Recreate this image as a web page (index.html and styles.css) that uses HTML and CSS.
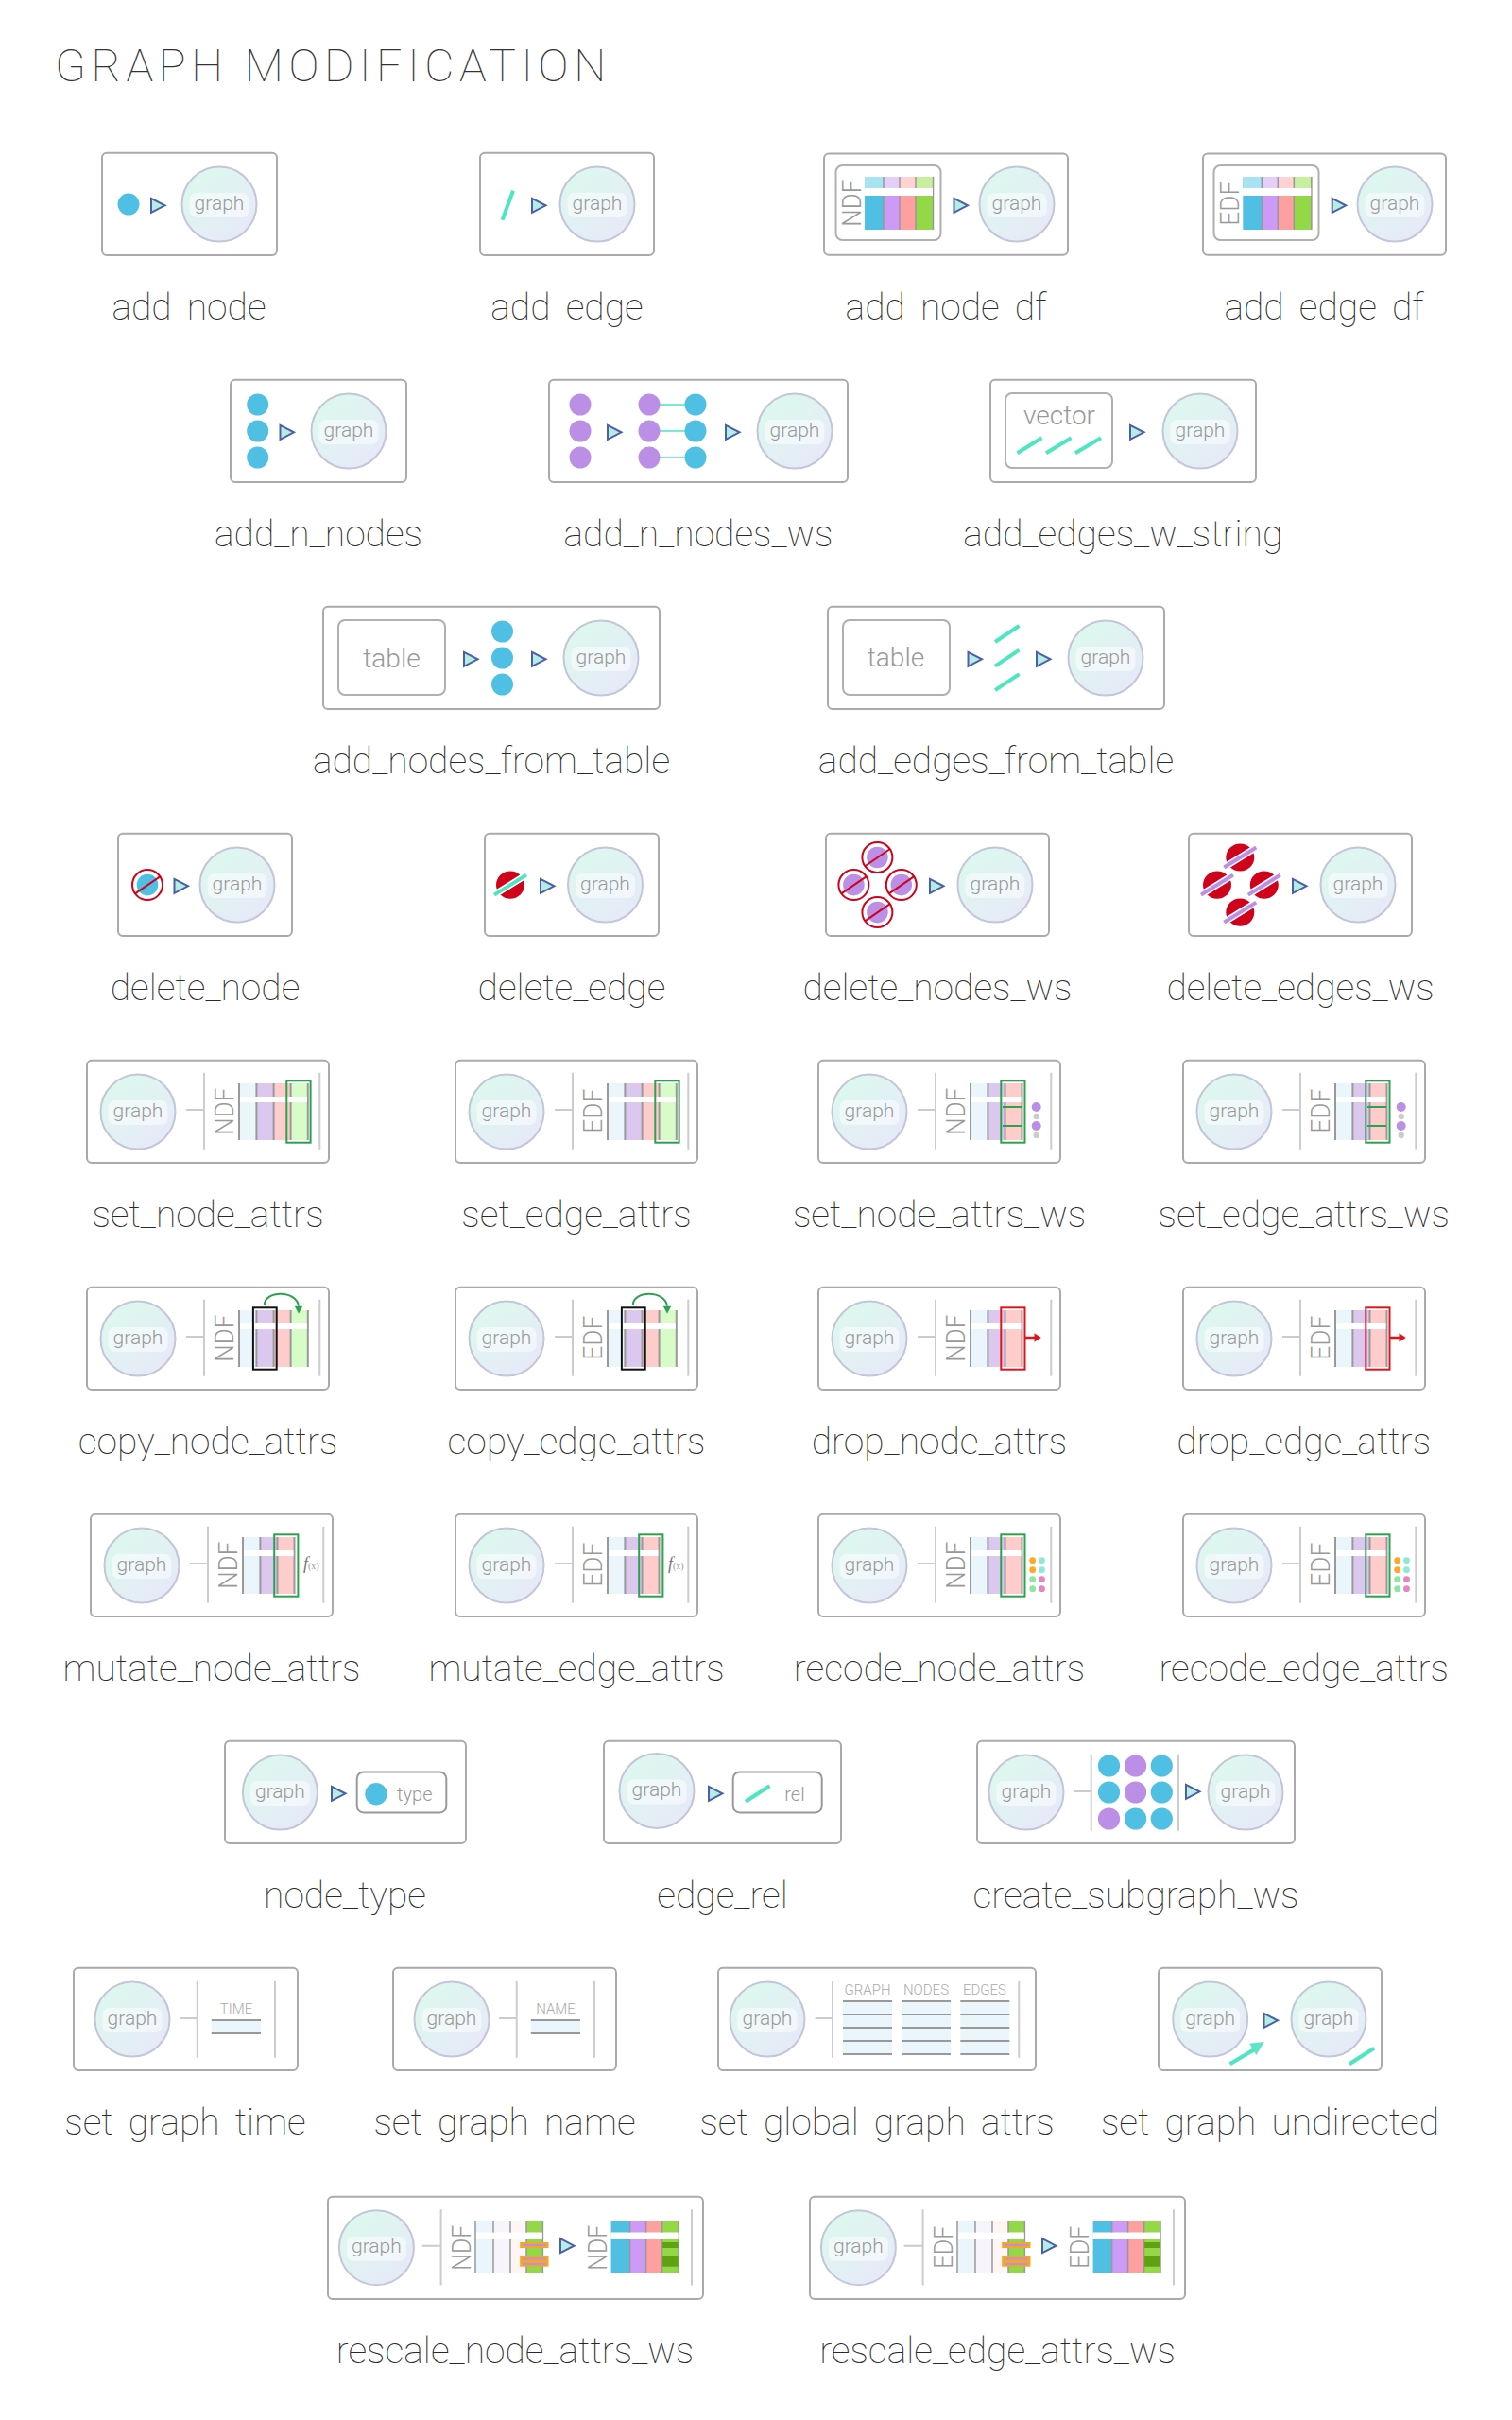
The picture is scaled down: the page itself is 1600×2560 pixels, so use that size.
FILE: index.html
```html
<!DOCTYPE html>
<html lang="en">
<head>
<meta charset="utf-8">
<title>Graph Modification</title>
<link rel="stylesheet" href="styles.css">
</head>
<body>
<svg class="defs" aria-hidden="true">
  <defs>
    <linearGradient id="gg" x1="0.15" y1="0.05" x2="0.85" y2="0.95">
      <stop offset="0" stop-color="#dcf9ee"/>
      <stop offset="1" stop-color="#e7e9f8"/>
    </linearGradient>
    <g id="g">
      <circle class="gc" r="39.5"/>
      <rect class="gp" x="-31.5" y="-12" width="63" height="26" rx="7"/>
    </g>
    <polygon id="tri" class="tri" points="1,-7.5 1,7.5 15.5,0"/>
    <g id="shell">
      <line class="bar" x1="106" y1="53.3" x2="125" y2="53.3"/>
      <line class="bar" x1="125" y1="14" x2="125" y2="95"/>
      <line class="bar" x1="247.3" y1="14" x2="247.3" y2="95"/>
    </g>
    <g id="df4">
      <rect class="c-b" width="20" height="56"/><rect class="c-p" x="20" width="17" height="56"/><rect class="c-r" x="37" width="17" height="56"/><rect class="c-g" x="54" width="19" height="56"/>
      <rect class="l-b" width="20" height="12"/><rect class="l-p" x="20" width="17" height="12"/><rect class="l-r" x="37" width="17" height="12"/><rect class="l-g" x="54" width="19" height="12"/>
      <rect class="wh" y="12" width="72" height="8"/>
      <path class="sep1" d="M20 0V56M37 0V56M54 0V56M72.5 0V56"/>
      <rect class="wh" y="12" width="72" height="8"/>
    </g>
    <g id="df5">
      <rect class="c-b" width="20" height="56"/><rect class="c-p" x="20" width="17" height="56"/><rect class="c-r" x="37" width="17" height="56"/><rect class="c-g" x="54" width="17.4" height="56"/>
      <rect class="wh" y="12.7" width="71" height="7.3"/>
      <path class="sep1" d="M20 0V56M37 0V56M54 0V56M71.4 0V56"/>
      <rect class="wh" y="12.7" width="71" height="7.3"/>
      <rect class="dk" x="54.5" y="23" width="16.5" height="6"/><rect class="dk" x="54.5" y="37" width="16.5" height="11.7"/>
    </g>
    <g id="pale10">
      <rect class="p-b" width="19" height="56"/><rect class="p-p2" x="19" width="18" height="56"/><rect class="p-r2" x="37" width="17" height="56"/><rect class="c-g" x="54" width="17.4" height="56"/>
      <rect class="wh" y="12.7" width="71" height="7.3"/>
      <path class="sep1" d="M0 0V56M19 0V56M37 0V56M54 0V56M71.4 0V56"/>
      <rect class="wh" x="1" y="12.7" width="69.6" height="7.3"/>
      <rect class="or" x="47.2" y="23" width="30.3" height="6"/><rect class="or" x="47.2" y="37" width="30.3" height="11.7"/>
      <rect class="st" x="50" y="25" width="24.6" height="2"/><rect class="st" x="50" y="39.5" width="24.6" height="2"/><rect class="st" x="50" y="45" width="24.6" height="2"/>
    </g>
    <g id="pt3">
      <rect class="p-b" width="18.4" height="60"/><rect class="p-p" x="18.4" width="18.1" height="60"/><rect class="p-r" x="36.5" width="18" height="60"/>
      <path class="sep" d="M0 0V60M18.4 0V60M36.5 0V60M54.5 0V60"/>
      <rect class="wh" x="1" y="14" width="52.5" height="6"/>
    </g>
    <g id="pt4">
      <rect class="p-b" width="18.4" height="60"/><rect class="p-p" x="18.4" width="18.2" height="60"/><rect class="p-r" x="36.6" width="18" height="60"/><rect class="p-g" x="54.6" width="18.2" height="60"/>
      <path class="sep" d="M0 0V60M18.4 0V60M36.6 0V60M54.6 0V60M72.8 0V60"/>
      <rect class="wh" x="1" y="14" width="70.8" height="6"/>
    </g>
    <g id="copy">
      <path class="arc" d="M188.8 20C188.8 4 223 4 225 21"/>
      <polygon class="arh" points="220.8,21 229.2,21 225,29"/>
      <rect class="hl-k" x="176.9" y="22.6" width="24.8" height="65.4"/>
    </g>
    <g id="rb"><circle class="ring" r="16"/><circle class="nb" r="11.3"/><line class="sl" x1="-13.5" y1="9.5" x2="13.5" y2="-9"/></g>
    <g id="rp"><circle class="ring" r="16"/><circle class="np" r="11.3"/><line class="sl" x1="-13.5" y1="9.5" x2="13.5" y2="-9"/></g>
    <g id="bt"><ellipse class="ball" rx="15" ry="14.6"/><line class="halo" x1="-17" y1="10.5" x2="17" y2="-10.5"/><line class="edge4" x1="-17" y1="10.5" x2="17" y2="-10.5"/></g>
    <g id="bp"><ellipse class="ball" rx="15" ry="14.6"/><line class="halo" x1="-17" y1="10.5" x2="17" y2="-10.5"/><line class="edgep" x1="-17" y1="10.5" x2="17" y2="-10.5"/></g>
    <g id="recode">
      <circle class="d-o" cx="227.7" cy="50" r="3.4"/><circle class="d-t" cx="237.5" cy="50" r="3.4"/>
      <circle class="d-o" cx="227.7" cy="60" r="3.4"/><circle class="d-t" cx="237.5" cy="60" r="3.4"/>
      <circle class="d-l" cx="227.7" cy="70" r="3.4"/><circle class="d-m" cx="237.5" cy="70" r="3.4"/>
      <circle class="d-l" cx="227.7" cy="80" r="3.4"/><circle class="d-m" cx="237.5" cy="80" r="3.4"/>
    </g>
    <g id="wsmark">
      <rect class="hl-g" x="194.3" y="22.6" width="25.2" height="65.4"/>
      <path class="tick" d="M196 50.3H216M196 70.3H216"/>
      <circle class="np" cx="231.7" cy="50.3" r="5"/><circle class="nx" cx="231.7" cy="60.3" r="3.2"/>
      <circle class="np" cx="231.7" cy="70.3" r="5"/><circle class="nx" cx="231.7" cy="80.3" r="3.2"/>
    </g>
    <g id="drop">
      <rect class="hl-r" x="194.3" y="22.6" width="25.2" height="65.4"/>
      <line class="drop-l" x1="220" y1="54.3" x2="231" y2="54.3"/>
      <polygon class="drop-h" points="229.5,49.5 236.8,54.3 229.5,59"/>
    </g>
  </defs>
</svg>

<h1 class="title">GRAPH MODIFICATION</h1>

<main class="rows">

<section class="row r1">
  <div class="card">
    <svg class="dia" width="187" height="111" viewBox="0 -.7 187 111">
      <rect class="frame" x="1" y="1" width="185" height="108.3" rx="5"/>
      <circle class="nb" cx="29" cy="55.4" r="11.5"/>
      <use href="#tri" x="52" y="56.6"/>
      <use href="#g" x="125" y="55.4"/><text class="gt" x="125" y="60">graph</text>
    </svg>
    <div class="label">add_node</div>
  </div>
  <div class="card">
    <svg class="dia" width="186" height="111" viewBox="0 -.7 186 111">
      <rect class="frame" x="1" y="1" width="184" height="108.3" rx="5"/>
      <line class="edge" x1="36" y1="41" x2="24.5" y2="72"/>
      <use href="#tri" x="55" y="56.6"/>
      <use href="#g" x="125" y="55.4"/><text class="gt" x="125" y="60">graph</text>
    </svg>
    <div class="label">add_edge</div>
  </div>
  <div class="card">
    <svg class="dia" width="260" height="111" viewBox="0 -.7 260 111">
      <rect class="frame" x="1" y="1.7" width="258" height="107.3" rx="5"/>
      <rect class="inner" x="13.5" y="14.3" width="111" height="79" rx="7"/>
      <text class="vt" transform="translate(40,79) rotate(-90)" textLength="50" lengthAdjust="spacingAndGlyphs">NDF</text>
      <use href="#df4" x="44" y="26.3"/>
      <use href="#tri" x="137.5" y="56.6"/>
      <use href="#g" x="205" y="55.4"/><text class="gt" x="205" y="60">graph</text>
    </svg>
    <div class="label">add_node_df</div>
  </div>
  <div class="card">
    <svg class="dia" width="259" height="111" viewBox="0 -.7 259 111">
      <rect class="frame" x="1" y="1.7" width="257" height="107.3" rx="5"/>
      <rect class="inner" x="12.5" y="14.3" width="111" height="79" rx="7"/>
      <text class="vt" transform="translate(39,78) rotate(-90)" textLength="47" lengthAdjust="spacingAndGlyphs">EDF</text>
      <use href="#df4" x="43.3" y="26.3"/>
      <use href="#tri" x="136.7" y="56.6"/>
      <use href="#g" x="204" y="55.4"/><text class="gt" x="204" y="60">graph</text>
    </svg>
    <div class="label">add_edge_df</div>
  </div>
</section>

<section class="row r2">
  <div class="card">
    <svg class="dia" width="188" height="111" viewBox="0 -.7 188 111">
      <rect class="frame" x="1" y="1" width="186" height="108.3" rx="5"/>
      <circle class="nb" cx="29.7" cy="27.3" r="11.5"/><circle class="nb" cx="29.7" cy="55.3" r="11.5"/><circle class="nb" cx="29.7" cy="83.3" r="11.5"/>
      <use href="#tri" x="52.5" y="56.6"/>
      <use href="#g" x="126" y="55.4"/><text class="gt" x="126" y="60">graph</text>
    </svg>
    <div class="label">add_n_nodes</div>
  </div>
  <div class="card">
    <svg class="dia" width="318" height="111" viewBox="0 -.7 318 111">
      <rect class="frame" x="1" y="1" width="316" height="108.3" rx="5"/>
      <circle class="np" cx="34" cy="27.3" r="11.5"/><circle class="np" cx="34" cy="55.3" r="11.5"/><circle class="np" cx="34" cy="83.3" r="11.5"/>
      <use href="#tri" x="62" y="56.6"/>
      <path class="link" d="M115 27.3H150M115 55.3H150M115 83.3H150"/>
      <circle class="np" cx="107" cy="27.3" r="11.5"/><circle class="np" cx="107" cy="55.3" r="11.5"/><circle class="np" cx="107" cy="83.3" r="11.5"/>
      <circle class="nb" cx="156" cy="27.3" r="11.5"/><circle class="nb" cx="156" cy="55.3" r="11.5"/><circle class="nb" cx="156" cy="83.3" r="11.5"/>
      <use href="#tri" x="187" y="56.6"/>
      <use href="#g" x="261" y="55.4"/><text class="gt" x="261" y="60">graph</text>
    </svg>
    <div class="label">add_n_nodes_ws</div>
  </div>
  <div class="card">
    <svg class="dia" width="283" height="111" viewBox="0 -.7 283 111">
      <rect class="frame" x="1" y="1" width="281" height="108.3" rx="5"/>
      <rect class="inner" x="17" y="15.3" width="113" height="79" rx="7"/>
      <text class="bt" x="74" y="48">vector</text>
      <path class="edge" d="M29.5 78.5L55.5 62.5M60 78.5L86.5 62.5M91 78.5L118 62.5"/>
      <use href="#tri" x="148" y="56.6"/>
      <use href="#g" x="223" y="55.4"/><text class="gt" x="223" y="60">graph</text>
    </svg>
    <div class="label">add_edges_w_string</div>
  </div>
</section>

<section class="row r3">
  <div class="card">
    <svg class="dia" width="358" height="111" viewBox="0 -.7 358 111">
      <rect class="frame" x="1" y="1" width="356" height="108.3" rx="5"/>
      <rect class="inner" x="17" y="15.3" width="113" height="79" rx="7"/>
      <text class="bt" x="73.5" y="65">table</text>
      <use href="#tri" x="149" y="56.6"/>
      <circle class="nb" cx="190.5" cy="27.3" r="11.5"/><circle class="nb" cx="190.5" cy="55.3" r="11.5"/><circle class="nb" cx="190.5" cy="83.3" r="11.5"/>
      <use href="#tri" x="221" y="56.6"/>
      <use href="#g" x="295" y="55.4"/><text class="gt" x="295" y="60">graph</text>
    </svg>
    <div class="label">add_nodes_from_table</div>
  </div>
  <div class="card">
    <svg class="dia" width="358" height="111" viewBox="0 -.7 358 111">
      <rect class="frame" x="1" y="1" width="356" height="108.3" rx="5"/>
      <rect class="inner" x="17" y="15.3" width="113" height="79" rx="7"/>
      <text class="bt" x="73" y="64.5">table</text>
      <use href="#tri" x="148.5" y="56.6"/>
      <path class="edge" d="M178 38.3L203.5 21.3M178 64L203.5 47M178 89.5L203.5 72.5"/>
      <use href="#tri" x="221" y="56.6"/>
      <use href="#g" x="295" y="55.4"/><text class="gt" x="295" y="60">graph</text>
    </svg>
    <div class="label">add_edges_from_table</div>
  </div>
</section>

<section class="row r4">
  <div class="card">
    <svg class="dia" width="186" height="111" viewBox="0 -.7 186 111">
      <rect class="frame" x="1" y="1" width="184" height="108.3" rx="5"/>
      <use href="#rb" x="32" y="55.4"/>
      <use href="#tri" x="59.5" y="56.6"/>
      <use href="#g" x="127" y="55.4"/><text class="gt" x="127" y="60">graph</text>
    </svg>
    <div class="label">delete_node</div>
  </div>
  <div class="card">
    <svg class="dia" width="186" height="111" viewBox="0 -.7 186 111">
      <rect class="frame" x="1" y="1" width="184" height="108.3" rx="5"/>
      <use href="#bt" x="28" y="55.4"/>
      <use href="#tri" x="59" y="56.6"/>
      <use href="#g" x="128.5" y="55.4"/><text class="gt" x="128.5" y="60">graph</text>
    </svg>
    <div class="label">delete_edge</div>
  </div>
  <div class="card">
    <svg class="dia" width="238" height="111" viewBox="0 -.7 238 111">
      <rect class="frame" x="1" y="1" width="236" height="108.3" rx="5"/>
      <use href="#rp" x="55.4" y="26.3"/><use href="#rp" x="30.4" y="55.4"/><use href="#rp" x="80.8" y="55.4"/><use href="#rp" x="55.4" y="84.4"/>
      <use href="#tri" x="110" y="56.6"/>
      <use href="#g" x="180" y="55.4"/><text class="gt" x="180" y="60">graph</text>
    </svg>
    <div class="label">delete_nodes_ws</div>
  </div>
  <div class="card">
    <svg class="dia" width="238" height="111" viewBox="0 -.7 238 111">
      <rect class="frame" x="1" y="1" width="236" height="108.3" rx="5"/>
      <use href="#bp" x="55.3" y="26.3"/><use href="#bp" x="31" y="55.4"/><use href="#bp" x="80.8" y="55.4"/><use href="#bp" x="55.3" y="84.4"/>
      <use href="#tri" x="110" y="56.6"/>
      <use href="#g" x="180" y="55.4"/><text class="gt" x="180" y="60">graph</text>
    </svg>
    <div class="label">delete_edges_ws</div>
  </div>
</section>

<section class="row r5">
  <div class="card">
    <svg class="dia" width="258" height="111" viewBox="0 -.7 258 111">
      <rect class="frame" x="1" y="1" width="256" height="108.3" rx="5"/>
      <use href="#shell"/>
      <use href="#g" x="55" y="55.4"/><text class="gt" x="55" y="60">graph</text>
      <text class="vt" transform="translate(155.8,80) rotate(-90)" textLength="50" lengthAdjust="spacingAndGlyphs">NDF</text>
      <use href="#pt4" x="162" y="25.3"/>
      <rect class="hl-g" x="212.3" y="22.6" width="25.3" height="65.4"/>
    </svg>
    <div class="label">set_node_attrs</div>
  </div>
  <div class="card">
    <svg class="dia" width="258" height="111" viewBox="0 -.7 258 111">
      <rect class="frame" x="1" y="1" width="256" height="108.3" rx="5"/>
      <use href="#shell"/>
      <use href="#g" x="55" y="55.4"/><text class="gt" x="55" y="60">graph</text>
      <text class="vt" transform="translate(155.8,78) rotate(-90)" textLength="47" lengthAdjust="spacingAndGlyphs">EDF</text>
      <use href="#pt4" x="162" y="25.3"/>
      <rect class="hl-g" x="212.3" y="22.6" width="25.3" height="65.4"/>
    </svg>
    <div class="label">set_edge_attrs</div>
  </div>
  <div class="card">
    <svg class="dia" width="258" height="111" viewBox="0 -.7 258 111">
      <rect class="frame" x="1" y="1" width="256" height="108.3" rx="5"/>
      <use href="#shell"/>
      <use href="#g" x="55" y="55.4"/><text class="gt" x="55" y="60">graph</text>
      <text class="vt" transform="translate(155.8,80) rotate(-90)" textLength="50" lengthAdjust="spacingAndGlyphs">NDF</text>
      <use href="#pt3" x="162" y="25.3"/>
      <use href="#wsmark"/>
    </svg>
    <div class="label">set_node_attrs_ws</div>
  </div>
  <div class="card">
    <svg class="dia" width="258" height="111" viewBox="0 -.7 258 111">
      <rect class="frame" x="1" y="1" width="256" height="108.3" rx="5"/>
      <use href="#shell"/>
      <use href="#g" x="55" y="55.4"/><text class="gt" x="55" y="60">graph</text>
      <text class="vt" transform="translate(155.8,78) rotate(-90)" textLength="47" lengthAdjust="spacingAndGlyphs">EDF</text>
      <use href="#pt3" x="162" y="25.3"/>
      <use href="#wsmark"/>
    </svg>
    <div class="label">set_edge_attrs_ws</div>
  </div>
</section>

<section class="row r5">
  <div class="card">
    <svg class="dia" width="258" height="111" viewBox="0 -.7 258 111">
      <rect class="frame" x="1" y="1" width="256" height="108.3" rx="5"/>
      <use href="#shell"/>
      <use href="#g" x="55" y="55.4"/><text class="gt" x="55" y="60">graph</text>
      <text class="vt" transform="translate(155.8,80) rotate(-90)" textLength="50" lengthAdjust="spacingAndGlyphs">NDF</text>
      <use href="#pt4" x="162" y="25.3"/>
      <use href="#copy"/>
    </svg>
    <div class="label">copy_node_attrs</div>
  </div>
  <div class="card">
    <svg class="dia" width="258" height="111" viewBox="0 -.7 258 111">
      <rect class="frame" x="1" y="1" width="256" height="108.3" rx="5"/>
      <use href="#shell"/>
      <use href="#g" x="55" y="55.4"/><text class="gt" x="55" y="60">graph</text>
      <text class="vt" transform="translate(155.8,78) rotate(-90)" textLength="47" lengthAdjust="spacingAndGlyphs">EDF</text>
      <use href="#pt4" x="162" y="25.3"/>
      <use href="#copy"/>
    </svg>
    <div class="label">copy_edge_attrs</div>
  </div>
  <div class="card">
    <svg class="dia" width="258" height="111" viewBox="0 -.7 258 111">
      <rect class="frame" x="1" y="1" width="256" height="108.3" rx="5"/>
      <use href="#shell"/>
      <use href="#g" x="55" y="55.4"/><text class="gt" x="55" y="60">graph</text>
      <text class="vt" transform="translate(155.8,80) rotate(-90)" textLength="50" lengthAdjust="spacingAndGlyphs">NDF</text>
      <use href="#pt3" x="162" y="25.3"/>
      <use href="#drop"/>
    </svg>
    <div class="label">drop_node_attrs</div>
  </div>
  <div class="card">
    <svg class="dia" width="258" height="111" viewBox="0 -.7 258 111">
      <rect class="frame" x="1" y="1" width="256" height="108.3" rx="5"/>
      <use href="#shell"/>
      <use href="#g" x="55" y="55.4"/><text class="gt" x="55" y="60">graph</text>
      <text class="vt" transform="translate(155.8,78) rotate(-90)" textLength="47" lengthAdjust="spacingAndGlyphs">EDF</text>
      <use href="#pt3" x="162" y="25.3"/>
      <use href="#drop"/>
    </svg>
    <div class="label">drop_edge_attrs</div>
  </div>
</section>

<section class="row r7">
  <div class="card">
    <svg class="dia" width="258" height="111" viewBox="0 -.7 258 111">
      <rect class="frame" x="1" y="1" width="256" height="108.3" rx="5"/>
      <use href="#shell"/>
      <use href="#g" x="55" y="55.4"/><text class="gt" x="55" y="60">graph</text>
      <text class="vt" transform="translate(155.8,80) rotate(-90)" textLength="50" lengthAdjust="spacingAndGlyphs">NDF</text>
      <use href="#pt3" x="162" y="25.3"/>
      <rect class="hl-g" x="195.2" y="22.6" width="25.2" height="65.4"/>
      <text class="fx" x="226" y="59">f<tspan class="fxs">(x)</tspan></text>
    </svg>
    <div class="label">mutate_node_attrs</div>
  </div>
  <div class="card">
    <svg class="dia" width="258" height="111" viewBox="0 -.7 258 111">
      <rect class="frame" x="1" y="1" width="256" height="108.3" rx="5"/>
      <use href="#shell"/>
      <use href="#g" x="55" y="55.4"/><text class="gt" x="55" y="60">graph</text>
      <text class="vt" transform="translate(155.8,78) rotate(-90)" textLength="47" lengthAdjust="spacingAndGlyphs">EDF</text>
      <use href="#pt3" x="162" y="25.3"/>
      <rect class="hl-g" x="195.2" y="22.6" width="25.2" height="65.4"/>
      <text class="fx" x="226" y="59">f<tspan class="fxs">(x)</tspan></text>
    </svg>
    <div class="label">mutate_edge_attrs</div>
  </div>
  <div class="card">
    <svg class="dia" width="258" height="111" viewBox="0 -.7 258 111">
      <rect class="frame" x="1" y="1" width="256" height="108.3" rx="5"/>
      <use href="#shell"/>
      <use href="#g" x="55" y="55.4"/><text class="gt" x="55" y="60">graph</text>
      <text class="vt" transform="translate(155.8,80) rotate(-90)" textLength="50" lengthAdjust="spacingAndGlyphs">NDF</text>
      <use href="#pt3" x="162" y="25.3"/>
      <rect class="hl-g" x="194.3" y="22.6" width="25.2" height="65.4"/>
      <use href="#recode"/>
    </svg>
    <div class="label">recode_node_attrs</div>
  </div>
  <div class="card">
    <svg class="dia" width="258" height="111" viewBox="0 -.7 258 111">
      <rect class="frame" x="1" y="1" width="256" height="108.3" rx="5"/>
      <use href="#shell"/>
      <use href="#g" x="55" y="55.4"/><text class="gt" x="55" y="60">graph</text>
      <text class="vt" transform="translate(155.8,78) rotate(-90)" textLength="47" lengthAdjust="spacingAndGlyphs">EDF</text>
      <use href="#pt3" x="162" y="25.3"/>
      <rect class="hl-g" x="194.3" y="22.6" width="25.2" height="65.4"/>
      <use href="#recode"/>
    </svg>
    <div class="label">recode_edge_attrs</div>
  </div>
</section>

<section class="row r8">
  <div class="card">
    <svg class="dia" width="257" height="111" viewBox="0 -.7 257 111">
      <rect class="frame" x="1" y="1" width="255" height="108.3" rx="5"/>
      <use href="#g" x="59.4" y="55.4"/><text class="gt" x="59.4" y="60">graph</text>
      <use href="#tri" x="113" y="56.6"/>
      <rect class="inner2" x="140.7" y="33.7" width="94.6" height="43" rx="7"/>
      <circle class="nb" cx="161" cy="57" r="11.7"/>
      <text class="tt" x="201.8" y="64">type</text>
    </svg>
    <div class="label">node_type</div>
  </div>
  <div class="card">
    <svg class="dia" width="253" height="111" viewBox="0 -.7 253 111">
      <rect class="frame" x="1" y="1" width="251" height="108.3" rx="5"/>
      <use href="#g" x="57" y="53.7"/><text class="gt" x="57" y="58.3">graph</text>
      <use href="#tri" x="111" y="56.6"/>
      <rect class="inner2" x="137.7" y="33.7" width="94" height="43" rx="7"/>
      <line class="edge" x1="151" y1="65" x2="176.5" y2="48.5"/>
      <text class="tt" x="203" y="64">rel</text>
    </svg>
    <div class="label">edge_rel</div>
  </div>
  <div class="card">
    <svg class="dia" width="338" height="111" viewBox="0 -.7 338 111">
      <rect class="frame" x="1" y="1" width="336" height="108.3" rx="5"/>
      <use href="#g" x="53" y="55.4"/><text class="gt" x="53" y="60">graph</text>
      <path class="bar" d="M103 54.3H121.7M121.7 15V96M214 15V96"/>
      <circle class="nb" cx="140.5" cy="27.3" r="11.6"/><circle class="np" cx="168.6" cy="27.3" r="11.6"/><circle class="nb" cx="196.3" cy="27.3" r="11.6"/>
      <circle class="nb" cx="140.5" cy="55.3" r="11.6"/><circle class="np" cx="168.6" cy="55.3" r="11.6"/><circle class="nb" cx="196.3" cy="55.3" r="11.6"/>
      <circle class="np" cx="140.5" cy="83.3" r="11.6"/><circle class="nb" cx="168.6" cy="83.3" r="11.6"/><circle class="nb" cx="196.3" cy="83.3" r="11.6"/>
      <use href="#tri" x="221" y="54.6"/>
      <use href="#g" x="285" y="55.4"/><text class="gt" x="285" y="60">graph</text>
    </svg>
    <div class="label">create_subgraph_ws</div>
  </div>
</section>

<section class="row r9">
  <div class="card">
    <svg class="dia" width="239" height="111" viewBox="0 -.7 239 111">
      <rect class="frame" x="1" y="1" width="237" height="108.3" rx="5"/>
      <use href="#g" x="63" y="55.4"/><text class="gt" x="63" y="60">graph</text>
      <path class="bar" d="M113 54.3H131.7M131.7 15.3V96M214 15.3V96"/>
      <text class="ht" x="173" y="49.3">TIME</text>
      <rect class="p-b" x="146.8" y="56.3" width="52.2" height="14"/>
      <path class="sep" d="M146.8 56.3H199M146.8 70.3H199"/>
    </svg>
    <div class="label">set_graph_time</div>
  </div>
  <div class="card">
    <svg class="dia" width="238" height="111" viewBox="0 -.7 238 111">
      <rect class="frame" x="1" y="1" width="236" height="108.3" rx="5"/>
      <use href="#g" x="63" y="55.4"/><text class="gt" x="63" y="60">graph</text>
      <path class="bar" d="M113 54.3H131.7M131.7 15.3V96M214 15.3V96"/>
      <text class="ht" x="173" y="49.3">NAME</text>
      <rect class="p-b" x="146.8" y="56.3" width="52.2" height="14"/>
      <path class="sep" d="M146.8 56.3H199M146.8 70.3H199"/>
    </svg>
    <div class="label">set_graph_name</div>
  </div>
  <div class="card">
    <svg class="dia" width="338" height="111" viewBox="0 -.7 338 111">
      <rect class="frame" x="1" y="1" width="336" height="108.3" rx="5"/>
      <use href="#g" x="53" y="55.4"/><text class="gt" x="53" y="60">graph</text>
      <path class="bar" d="M103.6 54.3H122M122 15.3V96M319.3 15.3V96"/>
      <text class="ht" x="159" y="29.3">GRAPH</text><text class="ht" x="221" y="29.3">NODES</text><text class="ht" x="283" y="29.3">EDGES</text>
      <rect class="p-b" x="133" y="36.3" width="52" height="56"/><rect class="p-b" x="195" y="36.3" width="52" height="56"/><rect class="p-b" x="257.3" y="36.3" width="52" height="56"/>
      <path class="sep" d="M133 36.3H185M133 50.3H185M133 64.3H185M133 78.3H185M133 92.3H185M195 36.3H247M195 50.3H247M195 64.3H247M195 78.3H247M195 92.3H247M257.3 36.3H309.3M257.3 50.3H309.3M257.3 64.3H309.3M257.3 78.3H309.3M257.3 92.3H309.3"/>
    </svg>
    <div class="label">set_global_graph_attrs</div>
  </div>
  <div class="card">
    <svg class="dia" width="238" height="111" viewBox="0 -.7 238 111">
      <rect class="frame" x="1" y="1" width="236" height="108.3" rx="5"/>
      <use href="#g" x="55.7" y="55.4"/><text class="gt" x="55.7" y="60">graph</text>
      <use href="#tri" x="111.5" y="56.6"/>
      <use href="#g" x="181" y="55.4"/><text class="gt" x="181" y="60">graph</text>
      <line class="edge" x1="76.5" y1="102.5" x2="103" y2="87"/>
      <polygon class="arw" points="112.7,79.3 97.1,81 104.4,93.3"/>
      <line class="edge" x1="203" y1="102.5" x2="229" y2="86"/>
    </svg>
    <div class="label">set_graph_undirected</div>
  </div>
</section>

<section class="row r10">
  <div class="card">
    <svg class="dia" width="399" height="111" viewBox="0 -.7 399 111">
      <rect class="frame" x="1" y="1" width="397" height="108.3" rx="5"/>
      <use href="#g" x="52.4" y="55"/><text class="gt" x="52.4" y="59.6">graph</text>
      <path class="bar" d="M100.6 53H120.6M120.6 14.6V94.7M386 14.6V94.7"/>
      <text class="vt" transform="translate(151.5,79) rotate(-90)" textLength="48" lengthAdjust="spacingAndGlyphs">NDF</text>
      <use href="#pale10" x="157" y="26.3"/>
      <use href="#tri" x="246" y="53"/>
      <text class="vt" transform="translate(295.5,79) rotate(-90)" textLength="48" lengthAdjust="spacingAndGlyphs">NDF</text>
      <use href="#df5" x="300.6" y="26.3"/>
    </svg>
    <div class="label">rescale_node_attrs_ws</div>
  </div>
  <div class="card">
    <svg class="dia" width="399" height="111" viewBox="0 -.7 399 111">
      <rect class="frame" x="1" y="1" width="397" height="108.3" rx="5"/>
      <use href="#g" x="52.4" y="55"/><text class="gt" x="52.4" y="59.6">graph</text>
      <path class="bar" d="M100.6 53H120.6M120.6 14.6V94.7M386 14.6V94.7"/>
      <text class="vt" transform="translate(151.5,77) rotate(-90)" textLength="45" lengthAdjust="spacingAndGlyphs">EDF</text>
      <use href="#pale10" x="157" y="26.3"/>
      <use href="#tri" x="246" y="53"/>
      <text class="vt" transform="translate(295.5,77) rotate(-90)" textLength="45" lengthAdjust="spacingAndGlyphs">EDF</text>
      <use href="#df5" x="300.6" y="26.3"/>
    </svg>
    <div class="label">rescale_edge_attrs_ws</div>
  </div>
</section>

</main>
</body>
</html>
```
FILE: styles.css
```css
html, body { margin: 0; padding: 0; background: #fff; }
body { font-family: Roboto, "Liberation Sans", sans-serif; color: #333; }

.defs { position: absolute; width: 0; height: 0; overflow: hidden; }

.title {
  margin: 0;
  padding: 42px 0 0 58px;
  height: 56px;
  font-size: 48px;
  line-height: 56px;
  font-weight: 100;
  letter-spacing: 5.6px;
  color: #333;
  white-space: nowrap;
}

.rows { display: flex; flex-direction: column; gap: 53px; padding-top: 62px; }

.row { display: grid; justify-items: center; }
.r1 { padding-left: 0; grid-template-columns: 400px 400px 402px 398px; }
.r2 { padding-left: 137px; grid-template-columns: 400px 404px 494.6px; }
.r3 { padding-left: 320px; grid-template-columns: 400px 668px; }
.r4 { padding-left: 17px; grid-template-columns: 400px 376px 398px 370px; }
.r5 { padding-left: 20px; grid-template-columns: 400px 380px 388px 383.4px; }
.r7 { padding-left: 24px; grid-template-columns: 400px 372px 396px 375.4px; }
.r8 { padding-left: 165px; grid-template-columns: 400px 399px 476px; }
.r9 { padding-left: 0; grid-template-columns: 392px 284px 504px 328px; }
.r10 { padding-left: 345px; margin-top: 2px; grid-template-columns: 400px 621px; }

.card { display: flex; flex-direction: column; align-items: center; height: 187px; }
.dia { display: block; flex: none; }
.label {
  margin-top: 32px;
  font-size: 39px;
  line-height: 44px;
  font-weight: 100;
  color: #2a2a2a;
  white-space: nowrap;
}

.frame { fill: #fff; stroke: #aaa; stroke-width: 2; }
.inner { fill: #fff; stroke: #b0b0b0; stroke-width: 2; }
.inner2 { fill: #fff; stroke: #999; stroke-width: 2; }
.gc { fill: url(#gg); stroke: #c3c6da; stroke-width: 2; }
.gp { fill: #fff; fill-opacity: .5; }
.tri { fill: #b7ece2; stroke: #4a60a8; stroke-width: 2; }
.nb { fill: #4fc0e4; }
.np { fill: #bc8fe6; }
.nx { fill: #ccc; }
.edge { fill: none; stroke: #4ce6c0; stroke-width: 4; }
.edge4 { stroke: #4ce6c0; stroke-width: 4; }
.edgep { stroke: #bc8fe6; stroke-width: 4; }
.halo { stroke: #fff; stroke-width: 7; }
.link { fill: none; stroke: #4ce6c0; stroke-width: 1.5; }
.ball { fill: #d0021b; }
.ring { fill: #fff; stroke: #d0021b; stroke-width: 2; }
.sl { stroke: #d0021b; stroke-width: 2; }
.bar { fill: none; stroke: #ccc; stroke-width: 2; }
.sep { fill: none; stroke: #999; stroke-width: 2; }
.sep1 { fill: none; stroke: #999; stroke-width: 1.5; }
.wh { fill: #fff; }
.c-b { fill: #4fc0e4; } .c-p { fill: #cd9bf7; } .c-r { fill: #ff9fa0; } .c-g { fill: #92d847; }
.l-b { fill: #a8e3f3; } .l-p { fill: #e6cefa; } .l-r { fill: #ffd2d3; } .l-g { fill: #c8ef9f; }
.p-b { fill: #eaf6fb; } .p-p { fill: #dcc8ee; } .p-r { fill: #ffcccc; } .p-g { fill: #d8fcc8; }
.p-p2 { fill: #f8f4fc; } .p-r2 { fill: #fff5f4; }
.dk { fill: #5fa110; }
.or { fill: #f5a623; }
.st { fill: #bc8fe6; }
.hl-g { fill: none; stroke: #2ca14f; stroke-width: 2; }
.hl-k { fill: none; stroke: #111; stroke-width: 2; }
.hl-r { fill: none; stroke: #e0141c; stroke-width: 2; }
.tick { fill: none; stroke: #2ca14f; stroke-width: 2; }
.arc { fill: none; stroke: #2ca14f; stroke-width: 2; }
.arh { fill: #2ca14f; }
.arw { fill: #5ce5c6; }
.drop-l { stroke: #e0141c; stroke-width: 2.5; }
.drop-h { fill: #e0141c; }
.d-o { fill: #ffa726; } .d-t { fill: #8fe8d8; } .d-l { fill: #8de79e; } .d-m { fill: #e884c0; }

.gt, .bt, .tt, .ht, .vt { font-family: Roboto, "Liberation Sans", sans-serif; font-weight: 300; fill: #999; }
.gt { font-size: 21px; text-anchor: middle; transform: translateY(1px); }
.bt { font-size: 28px; text-anchor: middle; }
.tt { font-size: 20px; text-anchor: middle; }
.ht { font-size: 15px; fill: #aaa; text-anchor: middle; }
.vt { font-size: 28px; }
.fx { font-family: "Liberation Serif", serif; font-style: italic; font-size: 18px; fill: #777; }
.fxs { font-size: 10px; font-style: normal; fill: #999; }
```
